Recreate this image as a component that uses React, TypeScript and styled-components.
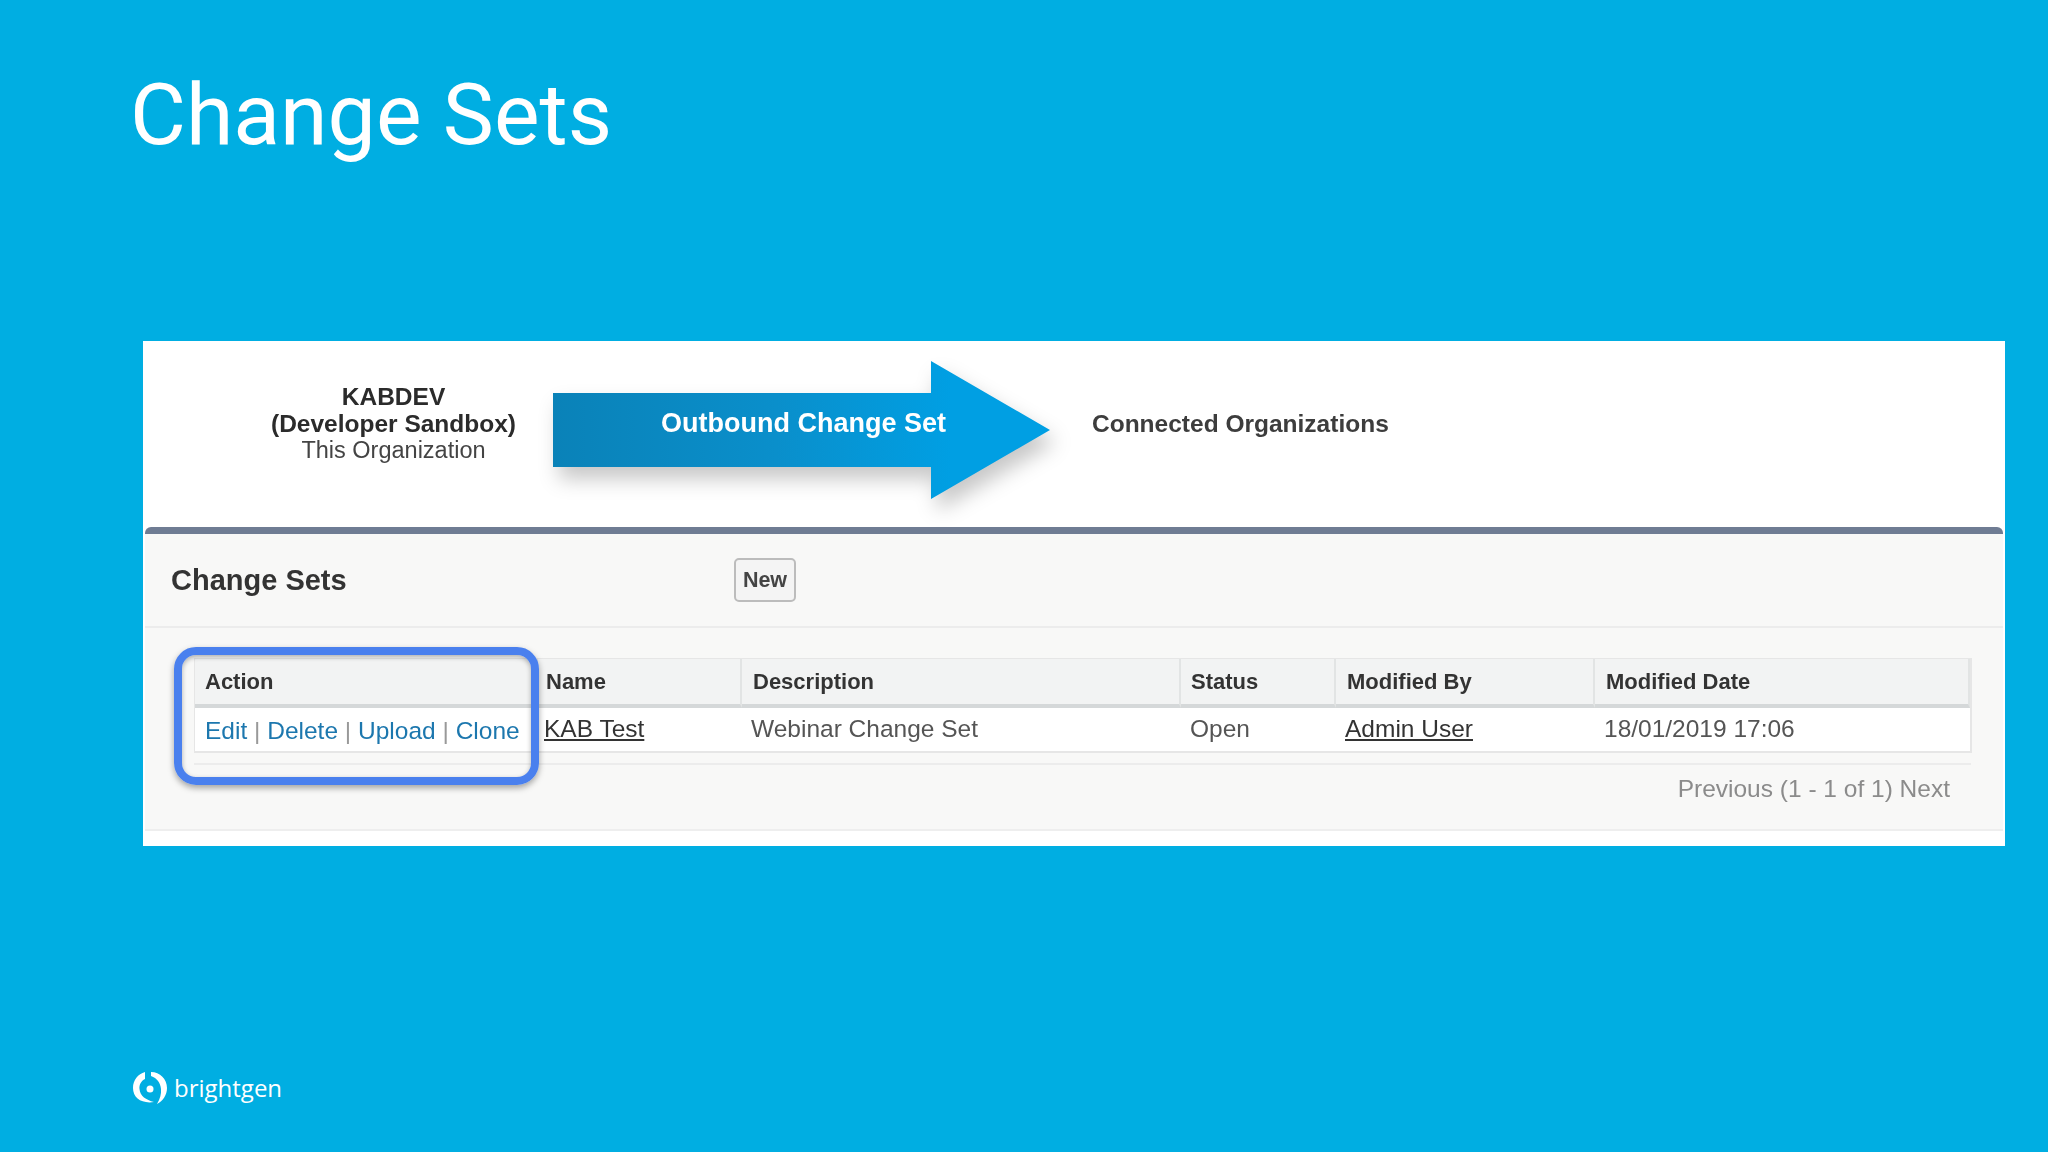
import React from "react";
import styled, { createGlobalStyle } from "styled-components";

const GlobalStyle = createGlobalStyle`
  html, body {
    margin: 0;
    padding: 0;
    background: #00aee2;
  }
`;

const Slide = styled.div`
  width: 2048px;
  height: 1152px;
  background: #00aee2;
  display: flex;
  flex-direction: column;
  padding: 62px 43px 0 132px;
  box-sizing: border-box;
  overflow: hidden;
`;

const Title = styled.h1`
  margin: 0 0 0 -2px;
  height: 279px;
  font: 400 86px/106px Roboto, sans-serif;
  color: #fff;
`;

const Shot = styled.div`
  margin-left: 11px;
  height: 505px;
  background: #fff;
  display: flex;
  flex-direction: column;
  font-family: "Liberation Sans", Arial, sans-serif;
  color: #333;
  filter: blur(0.7px);
`;

const Banner = styled.div`
  height: 186px;
  flex: none;
  display: flex;
  padding: 20px 0 0 91px;
  box-sizing: border-box;
`;

const OrgBlock = styled.div`
  width: 319px;
  flex: none;
  padding-top: 23px;
  text-align: center;
  font-size: 23.5px;
  line-height: 26.5px;
  color: #444;
  b {
    display: block;
    font-size: 24.5px;
    color: #2b2b2b;
  }
`;

const ArrowShadow = styled.div`
  width: 497px;
  height: 138px;
  margin-right: 42px;
  flex: none;
  filter: drop-shadow(6px 12px 10px rgba(0, 0, 0, 0.22));
`;

const Arrow = styled.div`
  height: 100%;
  background: linear-gradient(90deg, #0a82b8 0%, #0a8fcb 45%, #009fe3 80%);
  clip-path: polygon(0 32px, 378px 32px, 378px 0, 100% 50%, 378px 100%, 378px 106px, 0 106px);
  color: #fff;
  font-size: 27px;
  font-weight: 700;
  box-sizing: border-box;
  padding: 44px 0 0 108px;
  line-height: 36px;
`;

const Connected = styled.div`
  font-size: 24.5px;
  font-weight: 700;
  color: #3d3d3d;
  padding-top: 49px;
`;

const Panel = styled.div`
  position: relative;
  flex: 1;
  margin: 0 2px;
  border-top: 7px solid #6f7c93;
  border-radius: 6px 6px 0 0;
  background: #f8f8f7;
  display: flex;
  flex-direction: column;
`;

const Toolbar = styled.div`
  height: 94px;
  flex: none;
  box-sizing: border-box;
  border-bottom: 2px solid #ececec;
  display: flex;
  align-items: center;
  padding: 0 0 0 26px;
`;

const PanelTitle = styled.h2`
  margin: 0;
  width: 563px;
  font-size: 29px;
  font-weight: 700;
  color: #333;
`;

const NewButton = styled.button`
  width: 62px;
  height: 44px;
  padding: 0;
  border: 2px solid #bcbcbc;
  border-radius: 5px;
  background: #f4f4f4;
  font: 700 21.5px "Liberation Sans", Arial, sans-serif;
  color: #444;
`;

const Table = styled.div`
  margin: 30px 31px 0 49px;
  display: grid;
  grid-template-columns: 343px 204px 439px 155px 259px 1fr;
  grid-template-rows: 49px 43px;
  border: 2px solid #e6e6e6;
  border-top-width: 1px;
  border-left-width: 1px;
  flex: none;
`;

const HeadCell = styled.div<{ $pad?: number }>`
  background: #f2f3f3;
  border-right: 2px solid #e2e4e4;
  border-bottom: 4px solid #d5d8d9;
  font-size: 22px;
  font-weight: 700;
  color: #333;
  line-height: 45px;
  padding-left: ${({ $pad }) => $pad ?? 11}px;
  &:last-of-type {
    border-right: none;
  }
`;

const BodyCell = styled.div`
  background: #fff;
  font-size: 24.5px;
  line-height: 41px;
  color: #555;
  padding-left: 9px;
  white-space: nowrap;
`;

const NameCell = styled(BodyCell)`
  padding-left: 6px;
`;

const ActionCell = styled(BodyCell)`
  padding: 3px 0 0 10px;
  line-height: 40px;
  color: #999;
`;

const ActionLink = styled.a`
  color: #1c77ae;
`;

const RecordLink = styled.a`
  color: #333;
  text-decoration: underline;
`;

const Pager = styled.div`
  margin: 10px 32px 0 49px;
  padding: 4px 21px 0 0;
  height: 66px;
  box-sizing: border-box;
  border-top: 2px solid #ececec;
  text-align: right;
  font-size: 24.5px;
  line-height: 40px;
  color: #8b8b8b;
  flex: none;
`;

const PanelEnd = styled.div`
  border-top: 2px solid #eeeeee;
  background: #fff;
  flex: 1;
`;

const Highlight = styled.div`
  position: absolute;
  left: 29px;
  top: 113px;
  width: 365px;
  height: 138px;
  box-sizing: border-box;
  border: 8px solid #4a80ee;
  border-radius: 22px;
  box-shadow: 0 3px 6px rgba(0, 0, 0, 0.35), inset 0 2px 5px rgba(0, 0, 0, 0.3);
`;

const Footer = styled.div`
  margin-top: 225px;
  display: flex;
  align-items: center;
  gap: 6px;
  color: #fff;
  font: 400 24px/34px "Open Sans", sans-serif;
`;

const Logo = () => (
  <svg width="36" height="34" viewBox="0 0 36 34" fill="#fff" aria-hidden="true">
    <path d="M13 1 L13 8 C9 10 7 14 7.500 18 C8 25 14 29 22 31 C10 33 1 27 1 17 C1 9 6 3 13 1 Z" />
    <path d="M19 1 C28 1 35 8 35 17 C35 24 31 30 25 33 C28 28 29.500 23 29 18 C28.500 12 25 7 19 5 Z" />
    <circle cx="18" cy="18" r="3.500" />
  </svg>
);

export default function App() {
  return (
    <>
      <GlobalStyle />
      <Slide>
        <Title>Change Sets</Title>
        <Shot>
          <Banner>
            <OrgBlock>
              <b>KABDEV</b>
              <b>(Developer Sandbox)</b>
              This Organization
            </OrgBlock>
            <ArrowShadow>
              <Arrow>Outbound Change Set</Arrow>
            </ArrowShadow>
            <Connected>Connected Organizations</Connected>
          </Banner>
          <Panel>
            <Toolbar>
              <PanelTitle>Change Sets</PanelTitle>
              <NewButton>New</NewButton>
            </Toolbar>
            <Table>
              <HeadCell $pad={10}>Action</HeadCell>
              <HeadCell $pad={8}>Name</HeadCell>
              <HeadCell>Description</HeadCell>
              <HeadCell $pad={10}>Status</HeadCell>
              <HeadCell>Modified By</HeadCell>
              <HeadCell>Modified Date</HeadCell>
              <ActionCell>
                <ActionLink>Edit</ActionLink> | <ActionLink>Delete</ActionLink> |{" "}
                <ActionLink>Upload</ActionLink> | <ActionLink>Clone</ActionLink>
              </ActionCell>
              <NameCell>
                <RecordLink>KAB Test</RecordLink>
              </NameCell>
              <BodyCell>Webinar Change Set</BodyCell>
              <BodyCell>Open</BodyCell>
              <BodyCell>
                <RecordLink>Admin User</RecordLink>
              </BodyCell>
              <BodyCell>18/01/2019 17:06</BodyCell>
            </Table>
            <Pager>Previous (1 - 1 of 1) Next</Pager>
            <PanelEnd />
            <Highlight />
          </Panel>
        </Shot>
        <Footer>
          <Logo />
          brightgen
        </Footer>
      </Slide>
    </>
  );
}
